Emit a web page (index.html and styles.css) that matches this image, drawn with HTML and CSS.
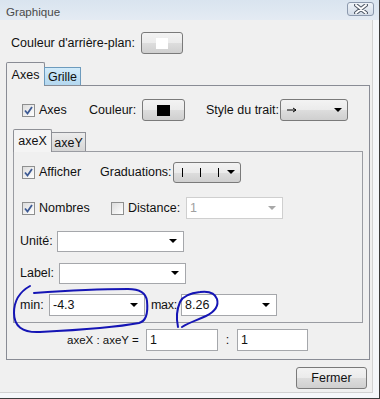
FILE: index.html
```html
<!DOCTYPE html>
<html lang="fr">
<head>
<meta charset="utf-8">
<title>Graphique</title>
<link rel="stylesheet" href="styles.css">
</head>
<body>
<div class="window">
  <div class="titlebar">
    <span class="title">Graphique</span>
    <span class="close">
      <svg width="14" height="10" viewBox="0 0 14 10">
        <path d="M2 1 L12 9 M12 1 L2 9" stroke="#4f5866" stroke-width="4" stroke-linecap="round"/>
        <path d="M2 1 L12 9 M12 1 L2 9" stroke="#ffffff" stroke-width="2" stroke-linecap="round"/>
      </svg>
    </span>
  </div>
  <div class="client">
    <div class="row bg-row">
      <span class="lbl w-bg">Couleur d'arrière-plan:</span>
      <span class="btn colorbtn"><span class="swatch swatch-white"></span></span>
    </div>

    <div class="tabstrip outer-tabs">
      <span class="tab tab-sel">Axes</span>
      <span class="tab tab-hover">Grille</span>
    </div>

    <div class="panel outer-panel">
      <div class="row axes-row">
        <span class="check chk-first"><svg width="11" height="11" viewBox="0 0 11 11"><path d="M2 5.5 L4.5 8.5 L9 2" fill="none" stroke="#3d5a94" stroke-width="1.8"/></svg></span>
        <span class="lbl after-check w-axes">Axes</span>
        <span class="lbl w-couleur">Couleur:</span>
        <span class="btn colorbtn2"><span class="swatch swatch-black"></span></span>
        <span class="lbl w-style">Style du trait:</span>
        <span class="btn combo combo-style">
          <svg class="line-arrow" width="10" height="6" viewBox="0 0 10 6"><path d="M0 3 H9" stroke="#000" stroke-width="1"/><path d="M6 1 L9 3 L6 5" fill="none" stroke="#000" stroke-width="1"/></svg>
          <span class="arrow"></span>
        </span>
      </div>

      <div class="tabstrip inner-tabs">
        <span class="tab2 tab2-sel">axeX</span>
        <span class="tab2 tab2-off">axeY</span>
      </div>

      <div class="panel inner-panel">
        <div class="row r1">
          <span class="check chk-inner"><svg width="11" height="11" viewBox="0 0 11 11"><path d="M2 5.5 L4.5 8.5 L9 2" fill="none" stroke="#3d5a94" stroke-width="1.8"/></svg></span>
          <span class="lbl after-check w-afficher">Afficher</span>
          <span class="lbl w-grad">Graduations:</span>
          <span class="btn combo combo-grad"><span class="ticks"><i></i><i></i><i></i></span><span class="arrow"></span></span>
        </div>
        <div class="row r2">
          <span class="check chk-inner"><svg width="11" height="11" viewBox="0 0 11 11"><path d="M2 5.5 L4.5 8.5 L9 2" fill="none" stroke="#3d5a94" stroke-width="1.8"/></svg></span>
          <span class="lbl after-check w-nombres">Nombres</span>
          <span class="check"></span>
          <span class="lbl after-check w-distance">Distance:</span>
          <span class="field field-disabled combo-dist"><span class="val">1</span><span class="arrow arrow-dis"></span></span>
        </div>
        <div class="row r3">
          <span class="lbl lbl-left w-unite">Unité:</span>
          <span class="field combo-wide"><span class="val"></span><span class="arrow"></span></span>
        </div>
        <div class="row r4">
          <span class="lbl lbl-left w-label">Label:</span>
          <span class="field combo-wide"><span class="val"></span><span class="arrow"></span></span>
        </div>
        <div class="row r5">
          <span class="lbl lbl-left w-min">min:</span>
          <span class="field combo-mm"><span class="val">-4.3</span><span class="arrow"></span></span>
          <span class="lbl w-max">max:</span>
          <span class="field combo-mm"><span class="val">8.26</span><span class="arrow"></span></span>
        </div>
      </div>

      <div class="row ratio-row">
        <span class="lbl w-ratio">axeX : axeY =</span>
        <span class="field input-a"><span class="val">1</span></span>
        <span class="lbl w-colon">:</span>
        <span class="field input-b"><span class="val">1</span></span>
      </div>
    </div>

    <div class="footer">
      <span class="btn fermer">Fermer</span>
    </div>
  </div>

  <svg class="marks" width="380" height="399" viewBox="0 0 380 399">
    <path d="M30 286 C21 291 14 299 14 313 C14 326 22 333 40 332 C80 330 118 327 139 323 C147 321 148 311 147 301 C146 293 140 289 128 289 C100 289 62 291 34 293" fill="none" stroke="#1515b5" stroke-width="2" stroke-linecap="round"/>
    <path d="M178 327 C176 318 177 309 180 302 C183 296 190 293 200 292 C208 291 215 293 217 299 C219 306 214 312 206 316 C198 320 190 322 182 327" fill="none" stroke="#1515b5" stroke-width="2" stroke-linecap="round"/>
  </svg>
</div>
</body>
</html>
```
FILE: styles.css
```css
* { box-sizing: border-box; }
html, body { margin: 0; padding: 0; background: #ffffff; }
body {
  font-family: "Liberation Sans", Arial, sans-serif;
  font-size: 12.5px;
  color: #111;
}
.window {
  position: relative;
  width: 380px;
  height: 399px;
  background: #f5f7fa;
  border-right: 1px solid #3c3c3c;
  border-bottom: 1px solid #3c3c3c;
  overflow: hidden;
}
.titlebar {
  height: 20px;
  display: flex;
  align-items: center;
  justify-content: space-between;
  background: linear-gradient(#d9e4ef, #e4ebf3);
  padding: 2px 5px 0 6px;
}
.title {
  font-size: 11.6px;
  color: #4a4a4a;
}
.close {
  width: 27px;
  height: 14px;
  margin-top: -5px;
  border: 1px solid #8c99ad;
  border-radius: 3px;
  background: linear-gradient(#eef3f8, #d3dce8);
  display: flex;
  align-items: center;
  justify-content: center;
}
.client {
  width: 373px;
  height: 373px;
  background: #f0f0f0;
  border-right: 1px solid #d2d2d2;
  border-bottom: 1px solid #d2d2d2;
  padding: 12px 5px 0 6px;
}
.row {
  display: flex;
  align-items: center;
  height: 22px;
}
.lbl { white-space: nowrap; flex: none; }
.bg-row { padding-left: 5px; }
.w-bg { width: 130px; }

.btn {
  flex: none;
  display: flex;
  align-items: center;
  justify-content: center;
  height: 22px;
  border: 1px solid #7a7a7a;
  border-radius: 3px;
  background: linear-gradient(#f3f3f3 0%, #ebebeb 50%, #dddddd 51%, #cfcfcf 100%);
}
.colorbtn { width: 42px; }
.colorbtn2 { width: 43px; }
.swatch { display: block; width: 12px; height: 11px; }
.swatch-white { background: #ffffff; }
.swatch-black { background: #000000; width: 13px; }

/* tabs */
.tabstrip {
  display: flex;
  align-items: flex-end;
  position: relative;
  z-index: 1;
}
.outer-tabs { margin-top: 8px; height: 23px; }
.tab {
  flex: none;
  display: flex;
  align-items: center;
  justify-content: center;
  border: 1px solid #898c95;
  border-bottom: none;
}
.tab-sel {
  width: 39px;
  height: 24px;
  margin-bottom: -1px;
  background: #f0f0f0;
  border-radius: 2px 2px 0 0;
}
.tab-hover {
  width: 37px;
  height: 18px;
  margin-left: -1px;
  background: linear-gradient(#d2ebfa, #b3d7ef);
  border-color: #6d9bbd;
  padding-top: 1px;
}
.panel {
  border: 1px solid #898c95;
}
.outer-panel {
  width: 364px;
  padding: 13px 6px 8px 6px;
}
.check {
  flex: none;
  width: 13px;
  height: 13px;
  border: 1px solid #8e8f8f;
  background: linear-gradient(135deg, #dcdcdc, #ffffff);
  display: flex;
  align-items: center;
  justify-content: center;
}
.chk-first { margin-left: 9px; }
.chk-inner { margin-left: 8px; }
.after-check { margin-left: 4px; }
.w-axes { width: 50px; }
.w-couleur { width: 53px; }
.w-style { margin-left: 21px; width: 74px; }

.combo {
  justify-content: space-between;
  padding: 0 5px 0 6px;
}
.combo-style { width: 68px; }
.line-arrow { display: block; }
.arrow {
  flex: none;
  width: 0;
  height: 0;
  border-left: 4px solid transparent;
  border-right: 4px solid transparent;
  border-top: 4px solid #000;
}
.arrow-dis { border-top-color: #a8a8a8; }

.inner-tabs { margin-top: 8px; height: 22px; }
.tab2 {
  flex: none;
  display: flex;
  align-items: center;
  justify-content: center;
  border: 1px solid #8e9096;
  border-bottom: none;
}
.tab2-sel {
  width: 39px;
  height: 23px;
  margin-bottom: -1px;
  background: #f4f4f4;
  border-radius: 2px 2px 0 0;
}
.tab2-off {
  width: 35px;
  height: 19px;
  margin-left: -1px;
  padding-top: 2px;
  background: linear-gradient(#ececec, #d6d6d6);
}
.inner-panel {
  width: 350px;
  padding: 9px 0 6px 0;
  border-color: #9a9ca2;
}
.r2 { margin-top: 14px; }
.r3 { margin-top: 11px; }
.r4, .r5 { margin-top: 10px; }
.w-afficher { width: 61px; }
.w-grad { width: 73px; }
.combo-grad { width: 68px; height: 21px; }
.ticks { display: flex; gap: 17px; padding-left: 2px; }
.ticks i { display: block; width: 1px; height: 9px; background: #000; }
.w-nombres { width: 72px; }
.w-distance { width: 58px; }

.field {
  flex: none;
  height: 22px;
  display: flex;
  align-items: center;
  justify-content: space-between;
  background: #ffffff;
  border: 1px solid #a5a7ab;
  padding: 0 6px 0 3px;
}
.field-disabled { border-color: #cfcfcf; color: #a0a0a0; }
.combo-dist { width: 97px; }
.lbl-left { margin-left: 6px; }
.w-unite { width: 37px; }
.w-label { width: 39px; }
.combo-wide { width: 127px; height: 21px; }
.w-min { width: 29px; }
.combo-mm { width: 96px; }
.w-max { margin-left: 6px; width: 30px; letter-spacing: -0.3px; }

.ratio-row { margin-top: 6px; }
.w-ratio {
  margin-left: 54px;
  width: 79px;
  font-size: 11.5px;
}
.input-a { width: 72px; }
.w-colon { width: 19px; text-align: center; }
.input-b { width: 71px; }

.footer {
  display: flex;
  justify-content: flex-end;
  margin-top: 7px;
}
.fermer { width: 71px; height: 22px; }

.marks {
  position: absolute;
  left: 0;
  top: 0;
  pointer-events: none;
}
```
